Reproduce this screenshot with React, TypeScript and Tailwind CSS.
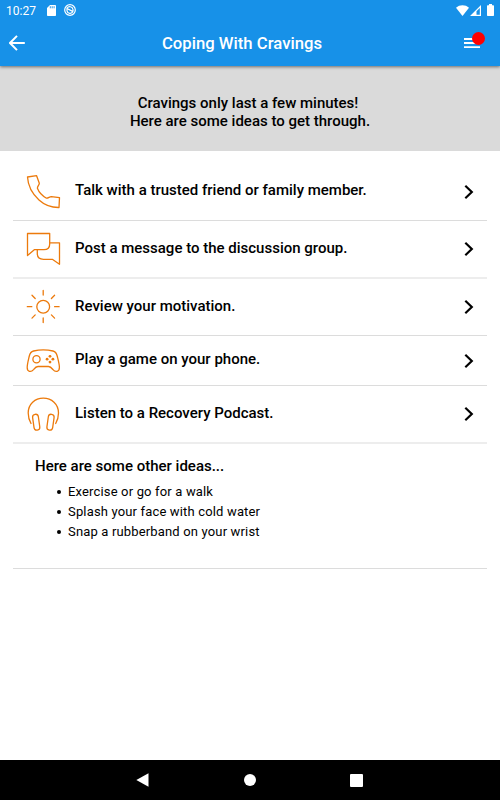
import type { ReactNode } from "react";

const ICON_PROPS = {
    fill: "none",
    stroke: "#ec7a0c",
    strokeWidth: 1.3,
    strokeLinejoin: "round" as const,
    strokeLinecap: "round" as const,
    className: "shrink-0",
};

function PhoneIcon() {
    return (
        <svg width="36" height="36" viewBox="0 0 36 36" {...ICON_PROPS}>
            <path d="M2.5 3 11.6 1.7 14.3 9.3C14 11.5 12.4 12 12.4 14.3 14 18.5 17.5 22 21.5 24.2 23.3 24.3 24.4 22.8 26.3 22.6L34.5 23.6 34 33.5C27 33.6 20 31.5 14 26 7.5 20 3 12 2.5 3Z" />
        </svg>
    );
}

function ChatIcon() {
    return (
        <svg width="36" height="36" viewBox="0 0 36 36" {...ICON_PROPS}>
            <path d="M2.5 2.5H24.7V13C24.7 16.5 22.5 18.7 19 18.7H9.3L2.5 24.5Z" />
            <path d="M24.7 11.8H34.5V33.3L27.3 28.3H18.5C14.5 28.3 12.3 26 12.3 22.5V18.7" />
        </svg>
    );
}

function SunIcon() {
    return (
        <svg width="36" height="36" viewBox="0 0 36 36" {...ICON_PROPS}>
            <circle cx="18.2" cy="17.7" r="6.4" />
            <path d="M18.2 1.5V6M18.2 29V33.5M2.3 17.7H6.8M29.6 17.7H34.1M7 6.3 10.2 9.5M26.4 25.9 29.6 29.1M7 29.1 10.2 25.9M26.4 9.5 29.6 6.3" />
        </svg>
    );
}

function GameIcon() {
    return (
        <svg width="36" height="28" viewBox="0 0 36 28" {...ICON_PROPS}>
            <path d="M8.5 4C14 2.8 22.5 2.8 28 4 30.5 4.6 31.5 6 32.2 9 33.2 13 34.4 17 34.4 20.5 34.4 24.8 30.5 25.6 28 22.6 26.2 20.4 25.5 19.5 23.5 19.5H13C11 19.5 10.2 20.4 8.5 22.6 6 25.6 2.2 24.8 2.2 20.5 2.2 17 3.4 13 4.3 9 5 6 6 4.6 8.5 4Z" />
            <circle cx="11.5" cy="12.3" r="3.6" />
            <g fill="#ec7a0c" stroke="none">
                <circle cx="25" cy="9.3" r="1.4" />
                <circle cx="25" cy="15.1" r="1.4" />
                <circle cx="22.1" cy="12.2" r="1.4" />
                <circle cx="27.9" cy="12.2" r="1.4" />
            </g>
        </svg>
    );
}

function HeadphonesIcon() {
    return (
        <svg width="36" height="36" viewBox="0 0 36 36" {...ICON_PROPS}>
            <path d="M6 27.5C4 24 3.2 20.5 3.2 17 3.2 8 10 2.2 18.3 2.2S33.5 8 33.5 17C33.5 20.5 32.7 24 30.7 27.5" />
            <rect x="8.3" y="18.2" width="5.8" height="16" rx="2.9" transform="rotate(-8 11.2 26.2)" />
            <rect x="22.6" y="18.2" width="5.8" height="16" rx="2.9" transform="rotate(8 25.5 26.2)" />
        </svg>
    );
}

interface Idea {
    label: string;
    icon: ReactNode;
    row: string;
}

const IDEAS: Idea[] = [
    { label: "Talk with a trusted friend or family member.", icon: <PhoneIcon />, row: "h-[58px] border-b border-[#dcdcdc]" },
    { label: "Post a message to the discussion group.", icon: <ChatIcon />, row: "h-[58px] border-b-2 border-[#ededed]" },
    { label: "Review your motivation.", icon: <SunIcon />, row: "h-[57px] border-b border-[#dcdcdc]" },
    { label: "Play a game on your phone.", icon: <GameIcon />, row: "h-[50px] border-b border-[#dcdcdc]" },
    { label: "Listen to a Recovery Podcast.", icon: <HeadphonesIcon />, row: "h-[58px] border-b-2 border-[#ededed]" },
];

const OTHER_IDEAS = [
    "Exercise or go for a walk",
    "Splash your face with cold water",
    "Snap a rubberband on your wrist",
];

function StatusBar() {
    return (
        <div className="flex h-5 items-center pl-[6px] pr-[6px] text-xs text-white">
            <span className="w-[41px] pt-px">10:27</span>
            <svg width="9" height="11" viewBox="0 0 9 11" className="shrink-0">
                <path fill="white" d="M3 0H8.2Q9 0 9 .8V10.2Q9 11 8.2 11H.8Q0 11 0 10.2V3Z" />
                <path stroke="#1791e8" strokeWidth="0.9" d="M3.3 1.2V3.3M5.2 1.2V3.3M7.1 1.2V3.3" />
            </svg>
            <svg width="12" height="12" viewBox="0 0 12 12" className="ml-2 shrink-0" fill="none" stroke="white">
                <circle cx="6" cy="6" r="5.3" strokeWidth="1.2" />
                <path d="M3 4.4A3.2 3.2 0 0 1 9 5.5V7.6M9 7.6A3.2 3.2 0 0 1 3 6.8V4.4L9 7.6" strokeWidth="1.2" />
            </svg>
            <svg width="13" height="11" viewBox="0 0 13 11" className="ml-auto shrink-0">
                <path fill="white" d="M6.5 11 0 2.7C3.5-.6 9.5-.6 13 2.7Z" />
            </svg>
            <svg width="11" height="11" viewBox="0 0 11 11" className="ml-[1px] shrink-0">
                <path fill="white" fillRule="evenodd" d="M11 0V11H0ZM9.8 3V9.8H6.5V6.3Z" />
            </svg>
            <svg width="7" height="12" viewBox="0 0 7 12" className="ml-[6px] shrink-0">
                <path fill="white" d="M2 0H5V1.2H6.3Q7 1.2 7 2V11.2Q7 12 6.3 12H.7Q0 12 0 11.2V2Q0 1.2.7 1.2H2Z" />
            </svg>
        </div>
    );
}

export default function App() {
    return (
        <div className="flex h-[800px] w-[500px] flex-col overflow-hidden bg-white font-['Roboto',sans-serif] text-black">
            <header className="relative z-10 h-[66px] shrink-0 bg-[#1791e8] shadow-[0_1px_3px_rgba(0,0,0,0.5)]">
                <StatusBar />
                <div className="flex h-[46px] items-center pl-[9px] pr-[20px]">
                    <button aria-label="Back">
                        <svg width="16" height="16" viewBox="0 0 16 16" fill="none" stroke="white" strokeWidth="2">
                            <path d="M15.8 8H1.5M8 .9 1 8 8 15.1" />
                        </svg>
                    </button>
                    <h1 className="flex-1 pr-[5px] pt-px text-center text-[16.7px] font-medium text-white">Coping With Cravings</h1>
                    <button aria-label="Menu" className="relative">
                        <svg width="16" height="12" viewBox="0 0 16 12" stroke="white" strokeWidth="1.8">
                            <path d="M0 2H16M0 6H16M0 10.2H16" />
                        </svg>
                        <span className="absolute -top-[5px] left-[8px] size-[12.5px] rounded-full bg-[#ff0000]" />
                    </button>
                </div>
            </header>

            <section className="flex h-[85px] shrink-0 flex-col items-center bg-[#dadada] pt-[28px] text-[15px] leading-[18px] font-medium">
                <p className="pr-1">Cravings only last a few minutes!</p>
                <p>Here are some ideas to get through.</p>
            </section>

            <main className="flex-1 px-[13px] pt-3">
                <ul>
                    {IDEAS.map((idea) => (
                        <li key={idea.label} className={`flex items-center pl-3 pr-[13px] ${idea.row}`}>
                            {idea.icon}
                            <span className="ml-[14px] flex-1 pb-[2px] text-[15px] font-medium">{idea.label}</span>
                            <svg width="10" height="14" viewBox="0 0 10 14" fill="none" stroke="black" strokeWidth="2.2">
                                <path d="M1.3 .8 7.8 7 1.3 13.2" />
                            </svg>
                        </li>
                    ))}
                </ul>

                <section className="h-[125px] border-b border-[#dcdcdc] pl-[22px] pt-[12px]">
                    <h2 className="text-[15px] leading-5 font-medium">Here are some other ideas...</h2>
                    <ul className="mt-[6px] pl-[22px] text-[13px] leading-5 tracking-[0.16px]">
                        {OTHER_IDEAS.map((text) => (
                            <li key={text} className="flex items-center">
                                <span className="mr-[7px] size-1 rounded-full bg-black" />
                                {text}
                            </li>
                        ))}
                    </ul>
                </section>
            </main>

            <nav className="flex h-10 shrink-0 items-center bg-black pl-[136px]">
                <svg width="13" height="14" viewBox="0 0 13 14">
                    <path fill="white" d="M12.5 .2V13.8L.3 7Z" />
                </svg>
                <span className="ml-[95px] size-3 rounded-full bg-white" />
                <span className="ml-[94px] size-[13px] rounded-[1px] bg-white" />
            </nav>
        </div>
    );
}
